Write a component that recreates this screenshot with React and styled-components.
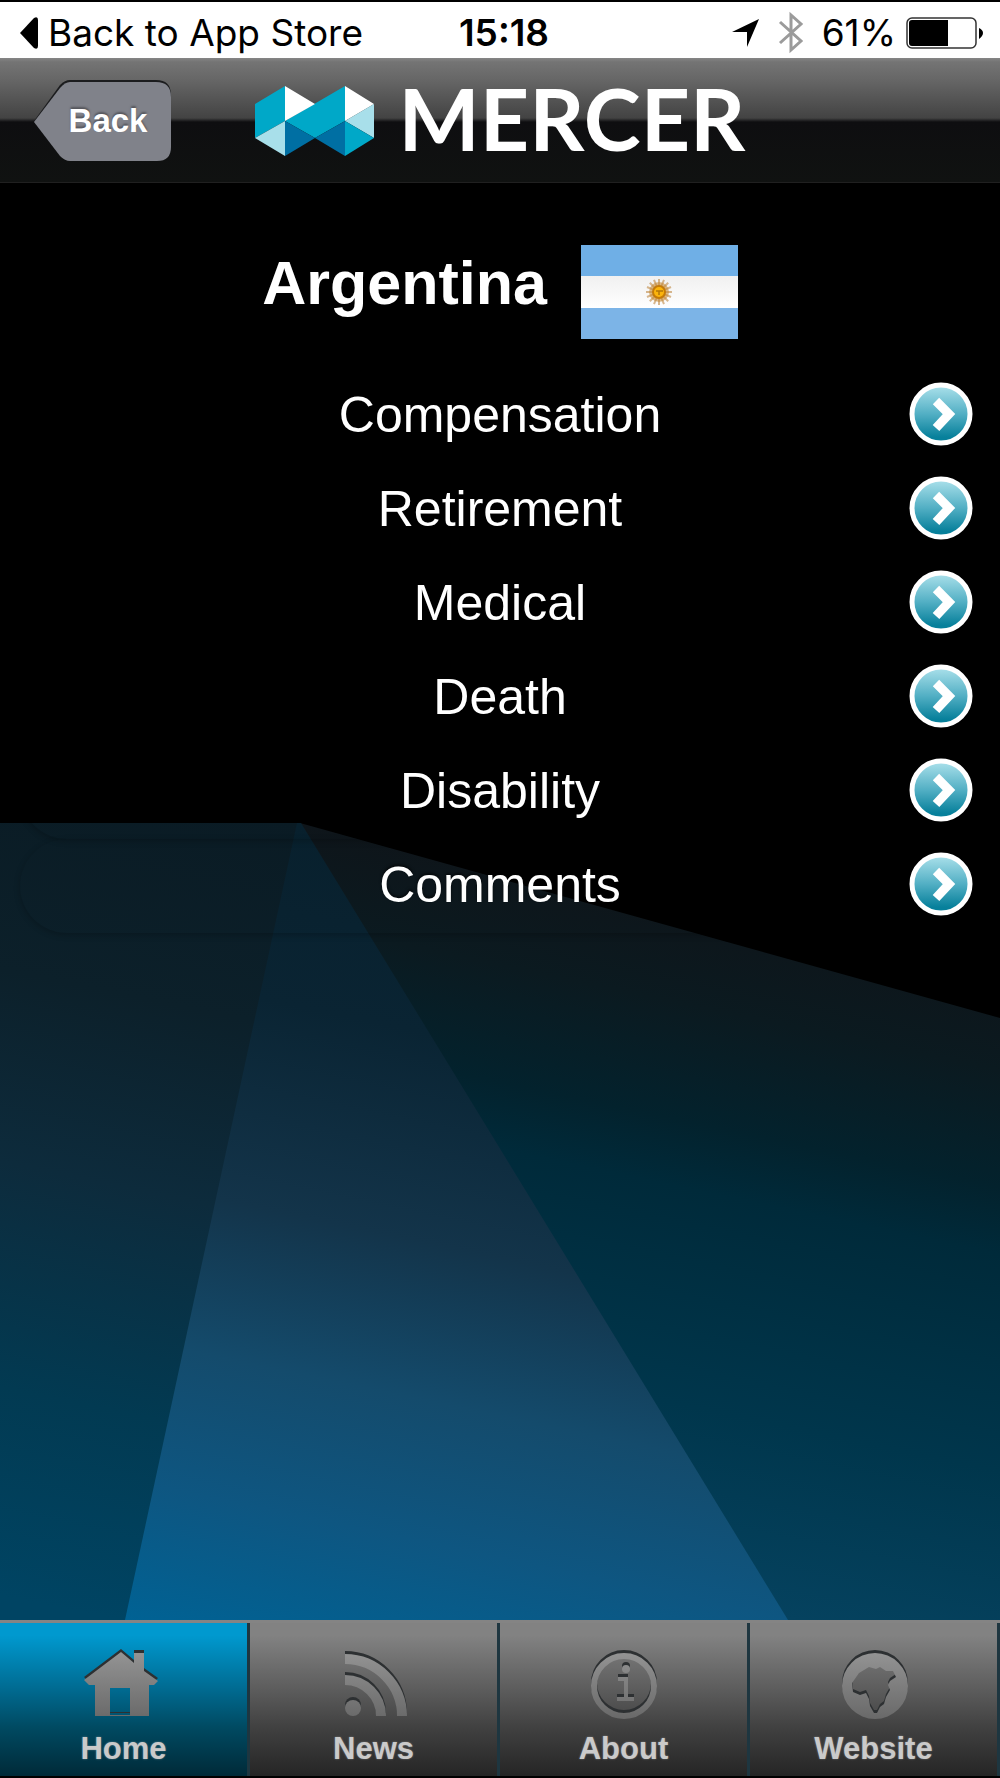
import React from 'react';
import styled, { createGlobalStyle } from 'styled-components';

const GlobalStyle = createGlobalStyle`
  *, *::before, *::after {
    box-sizing: border-box;
  }
  body {
    margin: 0;
    background: #000;
    font-family: 'Liberation Sans', Arial, sans-serif;
  }
`;

const StyledPage = styled.div`
  display: flex;
  flex-direction: column;
  min-height: 100vh;
`;

const StyledStatusBar = styled.div`
  display: grid;
  grid-template-columns: 1fr auto 1fr;
  align-items: center;
  height: 58px;
  padding: 6px 16px 0 20px;
  border-top: 2px solid #000;
  background: #fff;
  color: #000;
  font-family: Inter, Roboto, sans-serif;
  font-size: 37px;
  line-height: 44px;
`;

const StyledStatusLink = styled.a`
  display: flex;
  align-items: center;
  gap: 10px;
  color: inherit;
  text-decoration: none;
  white-space: nowrap;
`;

const StyledTime = styled.span`
  padding-left: 4px;
  font-weight: 600;
`;

const StyledStatusIcons = styled.div`
  display: flex;
  align-items: center;
  justify-content: flex-end;
`;

const StyledBluetooth = styled.svg`
  margin: 0 18px;
`;

const StyledBattery = styled.svg`
  margin-left: 10px;
`;

const StyledHeader = styled.header`
  display: grid;
  grid-template-columns: 1fr auto 1fr;
  align-items: start;
  height: 125px;
  padding: 21px 34px 0;
  border-bottom: 1px solid #202020;
  background: linear-gradient(#868686 0, #747474 4px, #666 22px, #434343 60px, #0e0e10 64px, #101211 100%);
`;

const StyledBackButton = styled.button`
  display: grid;
  width: 138px;
  height: 83px;
  padding: 0;
  border: 0;
  background: none;
  color: #fff;
  font-family: inherit;
  font-size: 33px;
  font-weight: bold;
  line-height: 84px;
  text-shadow: 0 -2px 2px #55565c;
  cursor: pointer;

  svg,
  span {
    grid-area: 1 / 1;
  }
  span {
    padding-left: 10px;
  }
`;

const StyledLogo = styled.div`
  display: flex;
  align-items: flex-start;
  gap: 24px;
  height: 83px;
  color: #fff;
  font-family: Lato, 'Open Sans', sans-serif;
  font-size: 86px;
  font-weight: bold;
  line-height: 78px;

  svg {
    margin-top: 7px;
  }
`;

const StyledMain = styled.main`
  position: relative;
  z-index: 0;
  flex: 1;
  padding: 62px 20px 0;
  color: #fff;
`;

const StyledBackdrop = styled.svg`
  position: absolute;
  z-index: -1;
  inset: 0;
  width: 100%;
  height: 100%;
`;

const StyledTitle = styled.div`
  display: flex;
  justify-content: center;
  gap: 34px;
  margin-bottom: 30px;
`;

const StyledHeading = styled.h1`
  margin: 0;
  font-size: 61px;
  line-height: 76px;
`;

const StyledList = styled.ul`
  margin: 0;
  padding: 0;
  list-style: none;
`;

const StyledRow = styled.button`
  display: grid;
  grid-template-columns: 64px 1fr 64px;
  align-items: center;
  width: 100%;
  height: 94px;
  padding: 0 7px 4px;
  border: 0;
  border-radius: 47px;
  background: none;
  box-shadow: 0 2px 6px rgba(0, 0, 0, 0.22);
  color: inherit;
  font-family: inherit;
  font-size: 50px;
  line-height: 56px;
  text-shadow: 0 -2px 3px rgba(0, 0, 0, 0.6);
  cursor: pointer;

  span {
    grid-column: 2;
    padding-top: 2px;
  }
`;

const StyledTabBar = styled.nav`
  display: grid;
  grid-template-columns: repeat(4, 1fr);
  height: 158px;
  border-top: 3px solid #848484;
  border-bottom: 2px solid #000;
`;

const StyledTab = styled.a`
  display: flex;
  flex-direction: column;
  align-items: center;
  padding-top: 22px;
  border-right: 3px solid #1e3640;
  background: ${({ $active }) =>
    $active
      ? 'linear-gradient(#0099cf 8%, #006c93 42%, #004a62 68%, #002a38)'
      : 'linear-gradient(#828282 8%, #5e5e5e 42%, #414141 68%, #252525)'};
  color: #cacaca;
  font-size: 31px;
  font-weight: bold;
  line-height: 36px;
  text-decoration: none;
  text-shadow: 0 0 2px rgba(200, 200, 200, 0.5);
`;

const StyledTabIcon = styled.svg`
  margin-bottom: 6px;
`;

const LogoMark = () => (
  <svg width="120" height="70" viewBox="0 0 120 70" aria-hidden="true">
    <path fill="#00a8c8" d="M0 18 30 0V35L0 52zM30 35 90 0V35L60 52z" />
    <path fill="#fff" d="M30 0 60 18 30 35zM90 0 119 18 90 35z" />
    <path fill="#a8dfea" d="M0 52 30 35V70zM119 18V52L90 35z" />
    <path fill="#006fa3" d="M30 35 60 52 30 70zM90 35V70L60 52z" />
    <path fill="#00a8c8" d="M90 35 119 52 90 70z" />
  </svg>
);

const Backdrop = () => (
  <StyledBackdrop viewBox="0 0 1000 1437" preserveAspectRatio="none" aria-hidden="true">
    <defs>
      <linearGradient id="left" gradientUnits="userSpaceOnUse" x1="300" y1="640" x2="132" y2="1440">
        <stop offset="0" stopColor="#0a1b24" />
        <stop offset="0.25" stopColor="#0c202a" />
        <stop offset="0.48" stopColor="#0d2b3c" />
        <stop offset="0.75" stopColor="#023a52" />
        <stop offset="1" stopColor="#004463" />
      </linearGradient>
      <linearGradient id="beam" gradientUnits="userSpaceOnUse" x1="300" y1="640" x2="132" y2="1440">
        <stop offset="0" stopColor="#08202d" />
        <stop offset="0.22" stopColor="#0a2433" />
        <stop offset="0.47" stopColor="#13344a" />
        <stop offset="0.66" stopColor="#144b6c" />
        <stop offset="0.83" stopColor="#0e5681" />
        <stop offset="1" stopColor="#006294" />
      </linearGradient>
      <linearGradient id="right" gradientUnits="userSpaceOnUse" x1="300" y1="640" x2="132" y2="1440">
        <stop offset="0" stopColor="#0e151a" />
        <stop offset="0.12" stopColor="#0b1a20" />
        <stop offset="0.26" stopColor="#03222d" />
        <stop offset="0.34" stopColor="#002a3a" />
        <stop offset="0.6" stopColor="#00364c" />
        <stop offset="0.83" stopColor="#05425f" />
      </linearGradient>
    </defs>
    <path fill="#000" d="M0 0H1000V1437H0z" />
    <path fill="url(#right)" d="M300 640 1000 835V1437H700z" />
    <path fill="url(#left)" d="M0 640H300V1437H0z" />
    <path fill="url(#beam)" d="M297 640H301L788 1437H125z" />
  </StyledBackdrop>
);

const rays = Array.from({ length: 16 }, (_, i) => i * 22.5);

const Flag = () => (
  <svg width="157" height="94" viewBox="0 0 157 94" role="img" aria-label="Flag">
    <defs>
      <linearGradient id="band" x2="0" y2="1">
        <stop offset="0" stopColor="#f0f0f0" />
        <stop offset="1" stopColor="#fff" />
      </linearGradient>
    </defs>
    <path fill="#6fafe6" d="M0 0H157V31H0z" />
    <path fill="url(#band)" d="M0 31H157V63H0z" />
    <path fill="#7cb4e7" d="M0 63H157V94H0z" />
    <circle cx="78" cy="47" r="10" fill="#c98d35" opacity="0.6" />
    {rays.map((angle) => (
      <path key={angle} d="M78 34V42" stroke="#c08a45" opacity="0.6" strokeWidth="2" transform={`rotate(${angle} 78 47)`} />
    ))}
    <circle cx="78" cy="47" r="6" fill="#fbb40c" stroke="#c47a08" strokeWidth="2" />
    <path d="M75 46H82M78 46V50" stroke="#b37508" strokeWidth="1.5" />
  </svg>
);

const Arrow = () => (
  <svg width="64" height="64" viewBox="0 0 64 64" aria-hidden="true">
    <defs>
      <linearGradient id="disc" x2="0" y2="1">
        <stop offset="0.05" stopColor="#a4dde8" />
        <stop offset="0.5" stopColor="#52afc4" />
        <stop offset="0.9" stopColor="#07809b" />
      </linearGradient>
    </defs>
    <circle cx="32" cy="32" r="29" fill="url(#disc)" stroke="#fff" strokeWidth="5" />
    <path d="M27 19 40 32 27 46" fill="none" stroke="#fff" strokeWidth="9" />
  </svg>
);

// Every tab icon is drawn twice: a dark copy 3px higher gives the engraved edge.
const Engraved = ({ children }) => (
  <StyledTabIcon width="80" height="80" viewBox="0 0 80 80" aria-hidden="true">
    <defs>
      <linearGradient id="metal" gradientUnits="userSpaceOnUse" x1="0" y1="5" x2="0" y2="74">
        <stop offset="0" stopColor="#959595" />
        <stop offset="1" stopColor="#696969" />
      </linearGradient>
    </defs>
    <g transform="translate(0 -3)">{children('#2d3032')}</g>
    <g>{children('url(#metal)')}</g>
  </StyledTabIcon>
);

const HomeIcon = () => (
  <Engraved>
    {(paint) => (
      <path
        fill={paint}
        fillRule="evenodd"
        d="M37 7 50 18V8H60V26L74 36 70 40H65V71H11V40H5L0 35zM26 43V70H46V43z"
      />
    )}
  </Engraved>
);

const NewsIcon = () => (
  <Engraved>
    {(paint) => (
      <>
        <circle cx="19" cy="63" r="8" fill={paint} />
        <path d="M11 35A36 36 0 0 1 47 71M11 14A57 57 0 0 1 68 71" fill="none" stroke={paint} strokeWidth="10" />
      </>
    )}
  </Engraved>
);

const AboutIcon = () => (
  <Engraved>
    {(paint) => (
      <>
        <circle cx="40" cy="41" r="30" fill="none" stroke={paint} strokeWidth="6" />
        <circle cx="42" cy="24" r="4" fill={paint} />
        <path d="M34 34H42V54M33 54H50" fill="none" stroke={paint} strokeWidth="4" />
      </>
    )}
  </Engraved>
);

const WebsiteIcon = () => (
  <Engraved>
    {(paint) => (
      <path
        fill={paint}
        fillRule="evenodd"
        d="M8 41A33 33 0 1 1 74 41A33 33 0 1 1 8 41zM35 22 42 24 46 22 52 26 59 26 62 32 56 36 54 40 56 45 52 52 50 59 46 62 43 68 40 68 36 61 35 54 32 48 26 50 19 47 18 38 25 28z"
      />
    )}
  </Engraved>
);

const topics = ['Compensation', 'Retirement', 'Medical', 'Death', 'Disability', 'Comments'];

const tabs = [
  { label: 'Home', Icon: HomeIcon },
  { label: 'News', Icon: NewsIcon },
  { label: 'About', Icon: AboutIcon },
  { label: 'Website', Icon: WebsiteIcon },
];

const StatusBar = () => (
  <StyledStatusBar>
    <StyledStatusLink href="#store">
      <svg width="18" height="32" viewBox="0 0 18 32" aria-hidden="true">
        <path d="M0 16 14 1Q18-1 18 3V29Q18 33 14 31z" />
      </svg>
      Back to App Store
    </StyledStatusLink>
    <StyledTime>15:18</StyledTime>
    <StyledStatusIcons>
      <svg width="28" height="28" viewBox="0 0 28 28" aria-hidden="true">
        <path d="M27 0 15 28V13H0z" />
      </svg>
      <StyledBluetooth width="26" height="44" viewBox="0 0 26 44" aria-hidden="true">
        <path d="M2 11 23 30 13 39V4L23 13 2 32" fill="none" stroke="#9b9b9b" strokeWidth="3" />
      </StyledBluetooth>
      61%
      <StyledBattery width="78" height="32" viewBox="0 0 78 32" aria-hidden="true">
        <rect x="1" y="1" width="69" height="30" rx="5" fill="none" stroke="#333" strokeWidth="1.5" />
        <path d="M6 3H42V29H6Q3 29 3 26V6Q3 3 6 3zM73 11Q77 13 77 16T73 22z" />
      </StyledBattery>
    </StyledStatusIcons>
  </StyledStatusBar>
);

const Header = () => (
  <StyledHeader>
    <StyledBackButton type="button">
      <svg width="138" height="83" viewBox="0 0 138 83" aria-hidden="true">
        <path fill="#1b1c1e" d="M0 42 26 6Q31 1 36 1H122Q137 1 137 16V60L36 80z" />
        <path fill="#80828a" d="M0 43 26 9Q31 3 36 3H122Q137 3 137 18V68Q137 82 123 82H36Q31 82 26 77z" />
      </svg>
      <span>Back</span>
    </StyledBackButton>
    <StyledLogo>
      <LogoMark />
      MERCER
    </StyledLogo>
  </StyledHeader>
);

const App = () => (
  <StyledPage>
    <GlobalStyle />
    <StatusBar />
    <Header />
    <StyledMain>
      <Backdrop />
      <StyledTitle>
        <StyledHeading>Argentina</StyledHeading>
        <Flag />
      </StyledTitle>
      <StyledList>
        {topics.map((topic) => (
          <li key={topic}>
            <StyledRow type="button">
              <span>{topic}</span>
              <Arrow />
            </StyledRow>
          </li>
        ))}
      </StyledList>
    </StyledMain>
    <StyledTabBar>
      {tabs.map(({ label, Icon }, index) => (
        <StyledTab key={label} href={`#${label.toLowerCase()}`} $active={index === 0}>
          <Icon />
          {label}
        </StyledTab>
      ))}
    </StyledTabBar>
  </StyledPage>
);

export default App;
